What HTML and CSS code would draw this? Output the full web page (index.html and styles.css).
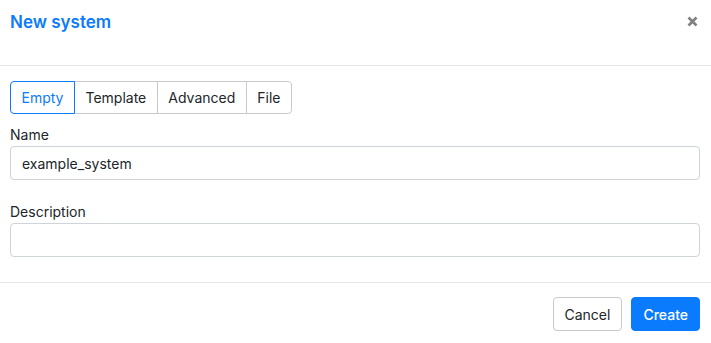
FILE: index.html
```html
<!DOCTYPE html>
<html lang="en">
<head>
  <meta charset="UTF-8" />
  <meta name="viewport" content="width=device-width, initial-scale=1.0" />
  <title>New system</title>
  <link rel="stylesheet" href="styles.css">
</head>
<body>
  <div class="modal">
    <header class="modal-header">
      <h1 class="modal-title">New system</h1>
      <button class="close-btn" aria-label="Close">
        <svg width="11" height="11" viewBox="0 0 11 11">
          <path d="M1.5 1.5 L9.5 9.5 M9.5 1.5 L1.5 9.5" stroke="#808080" stroke-width="2.6" stroke-linecap="butt" />
        </svg>
      </button>
    </header>

    <main class="modal-body">
      <div class="tabs">
        <button class="tab active">Empty</button>
        <button class="tab">Template</button>
        <button class="tab">Advanced</button>
        <button class="tab">File</button>
      </div>

      <div class="form-group">
        <label for="name">Name</label>
        <input type="text" id="name" value="example_system" />
      </div>

      <div class="form-group">
        <label for="desc">Description</label>
        <input type="text" id="desc" />
      </div>
    </main>

    <footer class="modal-footer">
      <button class="btn btn-cancel">Cancel</button>
      <button class="btn btn-create">Create</button>
    </footer>
  </div>
</body>
</html>
```

FILE: styles.css
```css
body {
  margin: 0;
  background-color: white;
  color: #212529;
  font-family: Inter, "Noto Sans", sans-serif;
  font-size: 14px;
}

.modal {
  width: 711px;
  height: 343px;
  display: flex;
  flex-direction: column;
}

.modal-header {
  height: 66px;
  box-sizing: border-box;
  padding: 11px 10px 0 10px;
  border-bottom: 1px solid #e5e5e5;
  display: flex;
  justify-content: space-between;
  align-items: flex-start;
}

.modal-title {
  margin: 0;
  font-size: 17px;
  font-weight: 600;
  color: #0b7bfd;
  line-height: 22px;
}

.close-btn {
  border: none;
  background: none;
  padding: 0;
  margin: 4px 3px 0 0;
  cursor: pointer;
}

.modal-body {
  padding: 15px 11px 0 10px;
}

.tabs {
  display: flex;
  margin-bottom: 11px;
}

.tab {
  font-family: inherit;
  font-size: 14px;
  color: #212529;
  background: white;
  border: 1px solid #c9c9c9;
  margin-left: -1px;
  height: 33px;
  padding: 0 10.5px;
  cursor: pointer;
}

.tab:first-child {
  margin-left: 0;
  border-radius: 4px 0 0 4px;
}

.tab:last-child {
  border-radius: 0 4px 4px 0;
}

.tab.active {
  color: #0b7bfd;
  border-color: #0b7bfd;
  position: relative;
  z-index: 1;
}

.form-group {
  display: flex;
  flex-direction: column;
  margin-bottom: 22px;
}

.form-group label {
  line-height: 20px;
  margin-bottom: 1px;
}

.form-group input {
  height: 34px;
  box-sizing: border-box;
  border: 1px solid #ced4da;
  border-radius: 4px;
  padding: 0 11px;
  font-family: inherit;
  font-size: 14px;
  color: #212529;
}

.modal-footer {
  margin-top: auto;
  border-top: 1px solid #e5e5e5;
  padding: 14px 11px 12px 10px;
  display: flex;
  justify-content: flex-end;
  gap: 9px;
}

.btn {
  font-family: inherit;
  font-size: 14px;
  height: 34px;
  padding: 0 11px;
  border-radius: 4px;
  cursor: pointer;
}

.btn-cancel {
  background: white;
  color: #212529;
  border: 1px solid #c9c9c9;
}

.btn-create {
  background: #0b7bfd;
  color: white;
  border: 1px solid #0b7bfd;
  font-weight: 500;
}
```
